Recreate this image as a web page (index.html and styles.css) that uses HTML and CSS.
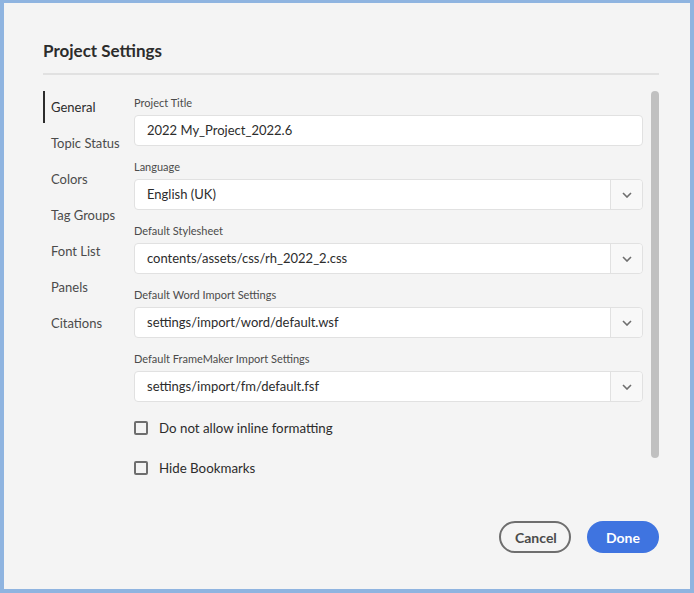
FILE: index.html
```html
<!DOCTYPE html>
<html lang="en">
<head>
    <meta charset="UTF-8">
    <meta name="viewport" content="width=device-width, initial-scale=1.0">
    <title>Project Settings</title>
    <link rel="stylesheet" href="styles.css">
</head>
<body>
    <div class="dialog">
        <h2 class="dialog-title">Project Settings</h2>
        <div class="dialog-body">
            <ul class="nav">
                <li class="nav-item active">General</li>
                <li class="nav-item">Topic Status</li>
                <li class="nav-item">Colors</li>
                <li class="nav-item">Tag Groups</li>
                <li class="nav-item">Font List</li>
                <li class="nav-item">Panels</li>
                <li class="nav-item">Citations</li>
            </ul>
            <div class="form">
                <div class="field">
                    <label class="field-label">Project Title</label>
                    <div class="text-input">2022 My_Project_2022.6</div>
                </div>
                <div class="field">
                    <label class="field-label">Language</label>
                    <div class="select">
                        <span class="select-value">English (UK)</span>
                        <span class="select-btn"><svg width="10" height="6" viewBox="0 0 10 6"><path d="M1 1l4 4 4-4" fill="none" stroke="#6e6e6e" stroke-width="1.6"/></svg></span>
                    </div>
                </div>
                <div class="field">
                    <label class="field-label">Default Stylesheet</label>
                    <div class="select">
                        <span class="select-value">contents/assets/css/rh_2022_2.css</span>
                        <span class="select-btn"><svg width="10" height="6" viewBox="0 0 10 6"><path d="M1 1l4 4 4-4" fill="none" stroke="#6e6e6e" stroke-width="1.6"/></svg></span>
                    </div>
                </div>
                <div class="field">
                    <label class="field-label">Default Word Import Settings</label>
                    <div class="select">
                        <span class="select-value">settings/import/word/default.wsf</span>
                        <span class="select-btn"><svg width="10" height="6" viewBox="0 0 10 6"><path d="M1 1l4 4 4-4" fill="none" stroke="#6e6e6e" stroke-width="1.6"/></svg></span>
                    </div>
                </div>
                <div class="field">
                    <label class="field-label">Default FrameMaker Import Settings</label>
                    <div class="select">
                        <span class="select-value">settings/import/fm/default.fsf</span>
                        <span class="select-btn"><svg width="10" height="6" viewBox="0 0 10 6"><path d="M1 1l4 4 4-4" fill="none" stroke="#6e6e6e" stroke-width="1.6"/></svg></span>
                    </div>
                </div>
                <div class="checks">
                    <div class="check">
                        <span class="check-box"></span>
                        <span>Do not allow inline formatting</span>
                    </div>
                    <div class="check">
                        <span class="check-box"></span>
                        <span>Hide Bookmarks</span>
                    </div>
                </div>
            </div>
            <div class="scrollbar"></div>
        </div>
        <div class="dialog-footer">
            <button class="btn btn-secondary">Cancel</button>
            <button class="btn btn-primary">Done</button>
        </div>
    </div>
</body>
</html>
```

FILE: styles.css
```css
body {
    margin: 0;
    background: #8fb4e0;
    font-family: 'Lato', sans-serif;
    color: #2c2c2c;
}
.dialog {
    margin: 3px 4px 0 4px;
    height: 586px;
    box-sizing: border-box;
    background: #f4f4f4;
    padding: 0 31px 0 39px;
    display: flex;
    flex-direction: column;
}
.dialog-title {
    margin: 0;
    padding-top: 36px;
    padding-bottom: 10px;
    font-size: 17px;
    line-height: 24px;
    font-weight: bold;
    color: #2c2c2c;
    border-bottom: 2px solid #e1e1e1;
}
.dialog-body {
    display: flex;
    margin-top: 16px;
    height: 368px;
}
.nav {
    list-style: none;
    margin: 0;
    padding: 0;
    width: 91px;
    flex-shrink: 0;
}
.nav-item {
    height: 32px;
    line-height: 32px;
    margin-bottom: 4px;
    padding-left: 8px;
    font-size: 13px;
    color: #4b4b4b;
}
.nav-item.active {
    border-left: 2px solid #2c2c2c;
    padding-left: 6px;
    color: #2c2c2c;
}
.form {
    width: 509px;
    flex-shrink: 0;
}
.field {
    margin-bottom: 13px;
}
.field-label {
    display: block;
    margin-top: 4px;
    font-size: 11px;
    line-height: 16px;
    color: #4b4b4b;
    margin-bottom: 4px;
}
.text-input, .select {
    height: 31px;
    box-sizing: border-box;
    background: #fff;
    border: 1px solid #e1e1e1;
    border-radius: 4px;
    font-size: 13px;
    color: #2c2c2c;
}
.text-input {
    line-height: 29px;
    padding-left: 12px;
}
.select {
    display: flex;
}
.select-value {
    flex: 1;
    line-height: 29px;
    padding-left: 12px;
}
.select-btn {
    width: 31px;
    background: #f8f8f8;
    border-left: 1px solid #e1e1e1;
    border-radius: 0 4px 4px 0;
    display: flex;
    align-items: center;
    justify-content: center;
}
.checks {
    padding-top: 3px;
}
.check {
    display: flex;
    align-items: center;
    gap: 11px;
    font-size: 13.3px;
    color: #2c2c2c;
    height: 20px;
    margin-bottom: 20px;
}
.check-box {
    width: 14px;
    height: 14px;
    box-sizing: border-box;
    border: 2px solid #6e6e6e;
    border-radius: 2px;
}
.scrollbar {
    width: 8px;
    height: 367px;
    margin-left: 8px;
    background: #c0c0c0;
    border-radius: 4px;
}
.dialog-footer {
    display: flex;
    justify-content: flex-end;
    gap: 16px;
    margin-top: 62px;
}
.btn {
    height: 32px;
    padding: 0 14px;
    border-radius: 16px;
    font-family: 'Lato', sans-serif;
    font-size: 14px;
    font-weight: bold;
    box-sizing: border-box;
}
.btn-secondary {
    width: 72px;
    background: transparent;
    border: 2px solid #6e6e6e;
    color: #4b4b4b;
}
.btn-primary {
    width: 72px;
    background: #3f74e0;
    border: none;
    color: #fff;
}
```
